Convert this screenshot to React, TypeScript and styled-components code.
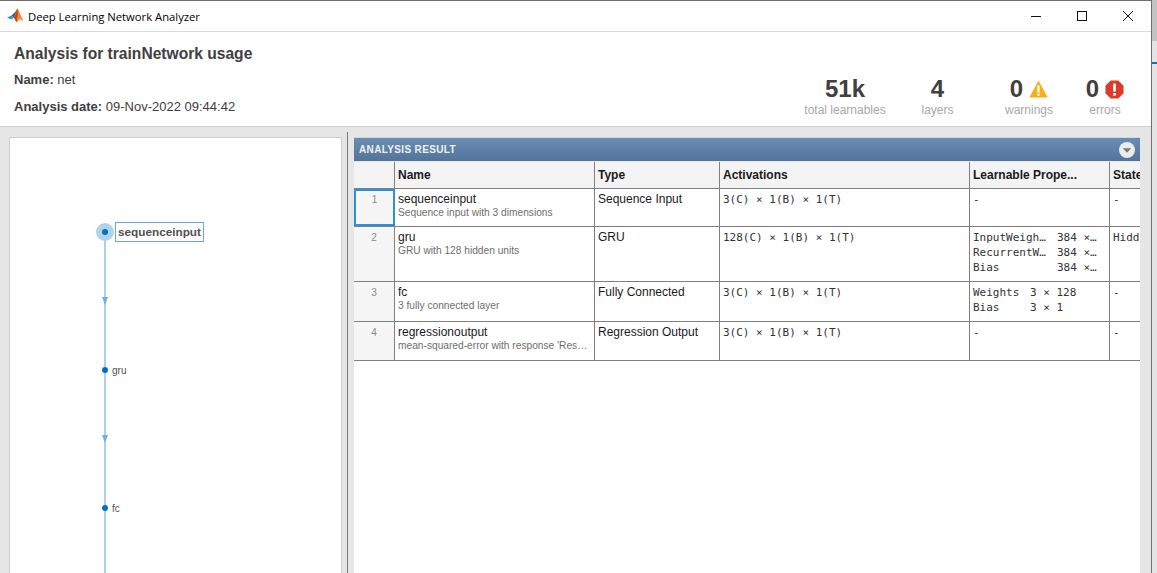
import { createGlobalStyle } from 'styled-components';
import styled from 'styled-components';

const GlobalStyle = createGlobalStyle`
  html, body {
    margin: 0;
    padding: 0;
    height: 100%;
    overflow: hidden;
    background: #f0f0f0;
  }
  * {
    box-sizing: border-box;
  }
`;

const layers = [
  {
    index: 1,
    name: 'sequenceinput',
    description: 'Sequence input with 3 dimensions',
    type: 'Sequence Input',
    activations: '3(C) × 1(B) × 1(T)',
    learnables: [['-', '']],
    keyWidth: 0,
    states: '-',
    height: 38,
  },
  {
    index: 2,
    name: 'gru',
    description: 'GRU with 128 hidden units',
    type: 'GRU',
    activations: '128(C) × 1(B) × 1(T)',
    learnables: [
      ['InputWeigh…', '384 ×…'],
      ['RecurrentW…', '384 ×…'],
      ['Bias', '384 ×…'],
    ],
    keyWidth: 84,
    states: 'Hidden',
    height: 55,
  },
  {
    index: 3,
    name: 'fc',
    description: '3 fully connected layer',
    type: 'Fully Connected',
    activations: '3(C) × 1(B) × 1(T)',
    learnables: [
      ['Weights', '3 × 128'],
      ['Bias', '3 × 1'],
    ],
    keyWidth: 57,
    states: '-',
    height: 40,
  },
  {
    index: 4,
    name: 'regressionoutput',
    description: "mean-squared-error with response 'Res…",
    type: 'Regression Output',
    activations: '3(C) × 1(B) × 1(T)',
    learnables: [['-', '']],
    keyWidth: 0,
    states: '-',
    height: 39,
  },
];

function App() {
  return (
    <>
      <GlobalStyle />
      <Page>
        <Window>
          <TitleBar>
            <TitleGroup>
              <svg width="17" height="16" viewBox="0 0 17 16">
                <path d="M0 9.6 L4.6 7.6 L6.8 9.6 L4 11.6 Z" fill="#3f8fc9" />
                <path d="M4.6 7.6 L7.6 4.6 L8.6 6 L6.8 9.6 Z" fill="#1f5f96" />
                <path d="M7.6 4.6 L10.6 0.6 L12.4 5.6 L10.6 9.6 L9.6 14.6 L6.8 9.6 L8.6 6 Z" fill="#c8431c" />
                <path d="M10.6 0.6 L13 5.6 L16.4 13.4 L13 11 L9.6 14.6 L10.8 8 Z" fill="#f08a24" />
              </svg>
              <WindowTitle>Deep Learning Network Analyzer</WindowTitle>
            </TitleGroup>
            <WindowControls>
              <WindowButton>
                <svg width="12" height="12" viewBox="0 0 12 12">
                  <path d="M1 6.5 H11" stroke="#111" strokeWidth="1" />
                </svg>
              </WindowButton>
              <WindowButton>
                <svg width="12" height="12" viewBox="0 0 12 12">
                  <rect x="1.5" y="1.5" width="9" height="9" fill="none" stroke="#111" />
                </svg>
              </WindowButton>
              <WindowButton>
                <svg width="12" height="12" viewBox="0 0 12 12">
                  <path d="M1 1 L11 11 M11 1 L1 11" stroke="#111" strokeWidth="1" />
                </svg>
              </WindowButton>
            </WindowControls>
          </TitleBar>

          <SummaryBar>
            <SummaryInfo>
              <Heading>Analysis for trainNetwork usage</Heading>
              <InfoLine>
                <b>Name:</b> net
              </InfoLine>
              <InfoLine>
                <b>Analysis date:</b> 09-Nov-2022 09:44:42
              </InfoLine>
            </SummaryInfo>
            <Stats>
              <Stat $width={82} $gap={0}>
                <StatValue>51k</StatValue>
                <StatLabel>total learnables</StatLabel>
              </Stat>
              <Stat $width={33} $gap={35}>
                <StatValue>4</StatValue>
                <StatLabel>layers</StatLabel>
              </Stat>
              <Stat $width={48} $gap={51}>
                <StatValue>
                  0
                  <svg width="19" height="18" viewBox="0 0 19 18">
                    <path d="M9.5 0.5 L18.7 17.5 H0.3 Z" fill="#f9ae1b" />
                    <rect x="8.4" y="5.5" width="2.2" height="7" fill="#fff" />
                    <rect x="8.4" y="13.6" width="2.2" height="2.2" fill="#fff" />
                  </svg>
                </StatValue>
                <StatLabel>warnings</StatLabel>
              </Stat>
              <Stat $width={30} $gap={37}>
                <StatValue>
                  0
                  <svg width="19" height="19" viewBox="0 0 19 19">
                    <path d="M5.7 0.5 H13.3 L18.5 5.7 V13.3 L13.3 18.5 H5.7 L0.5 13.3 V5.7 Z" fill="#dc3a2a" />
                    <rect x="8.2" y="3.5" width="2.6" height="8" fill="#fff" />
                    <rect x="8.2" y="13" width="2.6" height="2.6" fill="#fff" />
                  </svg>
                </StatValue>
                <StatLabel>errors</StatLabel>
              </Stat>
            </Stats>
          </SummaryBar>

          <Workspace>
            <GraphPanel>
              <GraphLine />
              <SelectedHalo />
              <GraphNode $top={91} />
              <SelectedLabel>sequenceinput</SelectedLabel>
              <GraphArrow $top={159} />
              <GraphNode $top={229} />
              <NodeLabel $top={227}>gru</NodeLabel>
              <GraphArrow $top={297} />
              <GraphNode $top={367} />
              <NodeLabel $top={365}>fc</NodeLabel>
            </GraphPanel>

            <Splitter />

            <ResultPanel>
              <ResultHeader>
                <ResultTitle>ANALYSIS RESULT</ResultTitle>
                <CollapseButton>
                  <svg width="16" height="16" viewBox="0 0 16 16">
                    <circle cx="8" cy="8" r="8" fill="#ececec" />
                    <path d="M3.8 6.2 H12.2 L8 10.8 Z" fill="#7a7a7a" />
                  </svg>
                </CollapseButton>
              </ResultHeader>
              <ResultTable>
                <HeadRow>
                  <HeadCell />
                  <HeadCell>Name</HeadCell>
                  <HeadCell>Type</HeadCell>
                  <HeadCell>Activations</HeadCell>
                  <HeadCell>Learnable Prope...</HeadCell>
                  <HeadCell>States</HeadCell>
                </HeadRow>
                {layers.map((layer) => (
                  <BodyRow key={layer.index} $height={layer.height}>
                    <IndexCell $selected={layer.index === 1}>{layer.index}</IndexCell>
                    <Cell>
                      <LayerName>{layer.name}</LayerName>
                      <LayerDescription>{layer.description}</LayerDescription>
                    </Cell>
                    <Cell>
                      <LayerName>{layer.type}</LayerName>
                    </Cell>
                    <Cell>
                      <MonoLine>{layer.activations}</MonoLine>
                    </Cell>
                    <Cell>
                      {layer.learnables.map(([key, value]) => (
                        <MonoLine key={key}>
                          <LearnableKey $width={layer.keyWidth}>{key}</LearnableKey>
                          {value}
                        </MonoLine>
                      ))}
                    </Cell>
                    <Cell>
                      <MonoLine>{layer.states}</MonoLine>
                    </Cell>
                  </BodyRow>
                ))}
              </ResultTable>
            </ResultPanel>
          </Workspace>
        </Window>
        <DesktopEdge>
          <DesktopAccent />
        </DesktopEdge>
      </Page>
    </>
  );
}

const Page = styled.div`
  display: flex;
  width: 1157px;
  height: 573px;
  overflow: hidden;
`;

const Window = styled.div`
  display: flex;
  flex-direction: column;
  width: 1152px;
  height: 573px;
  border-top: 1px solid #6e6e6e;
  border-right: 1px solid #6e6e6e;
  background: #e6e6e6;
`;

const TitleBar = styled.div`
  display: flex;
  align-items: center;
  justify-content: space-between;
  height: 31px;
  flex-shrink: 0;
  padding-left: 7px;
  background: #ffffff;
  border-bottom: 1px solid #d9d9d9;
`;

const TitleGroup = styled.div`
  display: flex;
  align-items: center;
  gap: 4px;
`;

const WindowTitle = styled.span`
  font-family: 'Open Sans', 'Noto Sans', sans-serif;
  font-size: 11.25px;
  color: #000000;
`;

const WindowControls = styled.div`
  display: flex;
  height: 100%;
`;

const WindowButton = styled.div`
  display: flex;
  align-items: center;
  justify-content: center;
  width: 46px;
  height: 100%;
`;

const SummaryBar = styled.div`
  display: flex;
  justify-content: space-between;
  height: 95px;
  flex-shrink: 0;
  padding: 12px 31px 0 14px;
  background: #ffffff;
  border-bottom: 1px solid #cfcfcf;
  font-family: 'Liberation Sans', Arial, sans-serif;
`;

const SummaryInfo = styled.div`
  display: flex;
  flex-direction: column;
`;

const Heading = styled.div`
  font-size: 15.6px;
  line-height: 20px;
  font-weight: bold;
  color: #404040;
`;

const InfoLine = styled.div`
  margin-top: 7px;
  font-size: 13px;
  line-height: 20px;
  color: #404040;

  &:nth-child(2) {
    margin-top: 6px;
  }
`;

const Stats = styled.div`
  display: flex;
  align-items: flex-start;
  padding-top: 32px;
`;

const Stat = styled.div<{ $width: number; $gap: number }>`
  display: flex;
  flex-direction: column;
  align-items: center;
  width: ${(props) => props.$width}px;
  margin-left: ${(props) => props.$gap}px;
`;

const StatValue = styled.div`
  display: flex;
  align-items: center;
  gap: 6px;
  height: 26px;
  font-size: 24px;
  font-weight: bold;
  color: #404040;
`;

const StatLabel = styled.div`
  margin-top: 1px;
  font-size: 12px;
  line-height: 14px;
  white-space: nowrap;
  color: #a8a8a8;
`;

const Workspace = styled.div`
  position: relative;
  display: flex;
  flex: 1;
  min-height: 0;
  padding: 10px 11px 0 9px;
`;

const GraphPanel = styled.div`
  position: relative;
  width: 333px;
  flex-shrink: 0;
  background: #ffffff;
  border: 1px solid #cccccc;
  border-bottom: none;
  overflow: hidden;
  font-family: 'Liberation Sans', Arial, sans-serif;
`;

const GraphLine = styled.div`
  position: absolute;
  left: 94px;
  top: 92px;
  bottom: 0;
  width: 2px;
  background: #aed0e8;
`;

const SelectedHalo = styled.div`
  position: absolute;
  left: 86px;
  top: 85px;
  width: 18px;
  height: 18px;
  border-radius: 50%;
  background: #b0d3ea;
`;

const GraphNode = styled.div<{ $top: number }>`
  position: absolute;
  left: 92px;
  top: ${(props) => props.$top}px;
  width: 6px;
  height: 6px;
  border-radius: 50%;
  background: #0072bd;
`;

const GraphArrow = styled.div<{ $top: number }>`
  position: absolute;
  left: 92px;
  top: ${(props) => props.$top}px;
  width: 0;
  height: 0;
  border-left: 3px solid transparent;
  border-right: 3px solid transparent;
  border-top: 8px solid #6fb0dc;
`;

const SelectedLabel = styled.div`
  position: absolute;
  left: 105px;
  top: 84px;
  height: 20px;
  padding: 0 2px;
  border: 1px solid #62a8d8;
  background: #ffffff;
  font-size: 11.75px;
  font-weight: bold;
  line-height: 18px;
  color: #505050;
`;

const NodeLabel = styled.div<{ $top: number }>`
  position: absolute;
  left: 102px;
  top: ${(props) => props.$top}px;
  font-size: 10px;
  line-height: 11px;
  color: #505050;
`;

const Splitter = styled.div`
  position: absolute;
  left: 347px;
  top: 5px;
  bottom: 0;
  width: 1px;
  background: #7a7a7a;
`;

const ResultPanel = styled.div`
  display: flex;
  flex-direction: column;
  width: 786px;
  margin-left: 12px;
  flex-shrink: 0;
  background: #ffffff;
  border-top: 1px solid #d6d6d6;
  overflow: hidden;
  font-family: 'Liberation Sans', Arial, sans-serif;
`;

const ResultHeader = styled.div`
  display: flex;
  align-items: center;
  justify-content: space-between;
  height: 24px;
  flex-shrink: 0;
  padding: 0 5px;
  background: linear-gradient(#6a8db4, #52749a);
  border-bottom: 1px solid #e8e8e8;
`;

const ResultTitle = styled.span`
  font-size: 10px;
  font-weight: bold;
  letter-spacing: 0.35px;
  color: #f0f0f0;
`;

const CollapseButton = styled.div`
  display: flex;
  align-items: center;
  height: 16px;
`;

const ResultTable = styled.div`
  display: flex;
  flex-direction: column;
  color: #1a1a1a;
`;

const HeadRow = styled.div`
  display: grid;
  grid-template-columns: 41px 200px 125px 250px 140px 30px;
  height: 27px;
  background: #f3f3f3;
  border-bottom: 1px solid #808080;
`;

const HeadCell = styled.div`
  padding: 1px 0 0 3px;
  overflow: hidden;
  white-space: nowrap;
  font-size: 12px;
  font-weight: bold;
  line-height: 24px;
  border-right: 1px solid #808080;

  &:last-child {
    border-right: none;
  }
`;

const BodyRow = styled.div<{ $height: number }>`
  display: grid;
  grid-template-columns: 41px 200px 125px 250px 140px 30px;
  height: ${(props) => props.$height}px;
  border-bottom: 1px solid #808080;
`;

const Cell = styled.div`
  padding: 3px 0 0 3px;
  overflow: hidden;
  white-space: nowrap;
  border-right: 1px solid #808080;

  &:last-child {
    border-right: none;
  }
`;

const IndexCell = styled.div<{ $selected: boolean }>`
  padding-top: ${(props) => (props.$selected ? '3px' : '5px')};
  text-align: center;
  font-size: 10px;
  line-height: 12px;
  color: #8a8a8a;
  background: #f5f5f5;
  border: ${(props) => (props.$selected ? '2px solid #2e8fdc' : 'none')};
  border-right: ${(props) => (props.$selected ? '2px solid #2e8fdc' : '1px solid #808080')};
`;

const LayerName = styled.div`
  font-size: 12px;
  line-height: 15px;
  color: #1a1a1a;
`;

const LayerDescription = styled.div`
  font-size: 10.2px;
  line-height: 12px;
  color: #6e6e6e;
`;

const MonoLine = styled.div`
  font-family: 'DejaVu Sans Mono', 'Liberation Mono', monospace;
  font-size: 11px;
  line-height: 15px;
  white-space: pre;
  color: #333333;
`;

const LearnableKey = styled.span<{ $width: number }>`
  display: inline-block;
  min-width: ${(props) => props.$width}px;
`;

const DesktopEdge = styled.div`
  width: 5px;
  height: 573px;
  padding-top: 62px;
  background: linear-gradient(#c4c4c4 41px, #e4e4e4 41px);
`;

const DesktopAccent = styled.div`
  height: 2px;
  background: #1c6fa8;
`;

export default App;
